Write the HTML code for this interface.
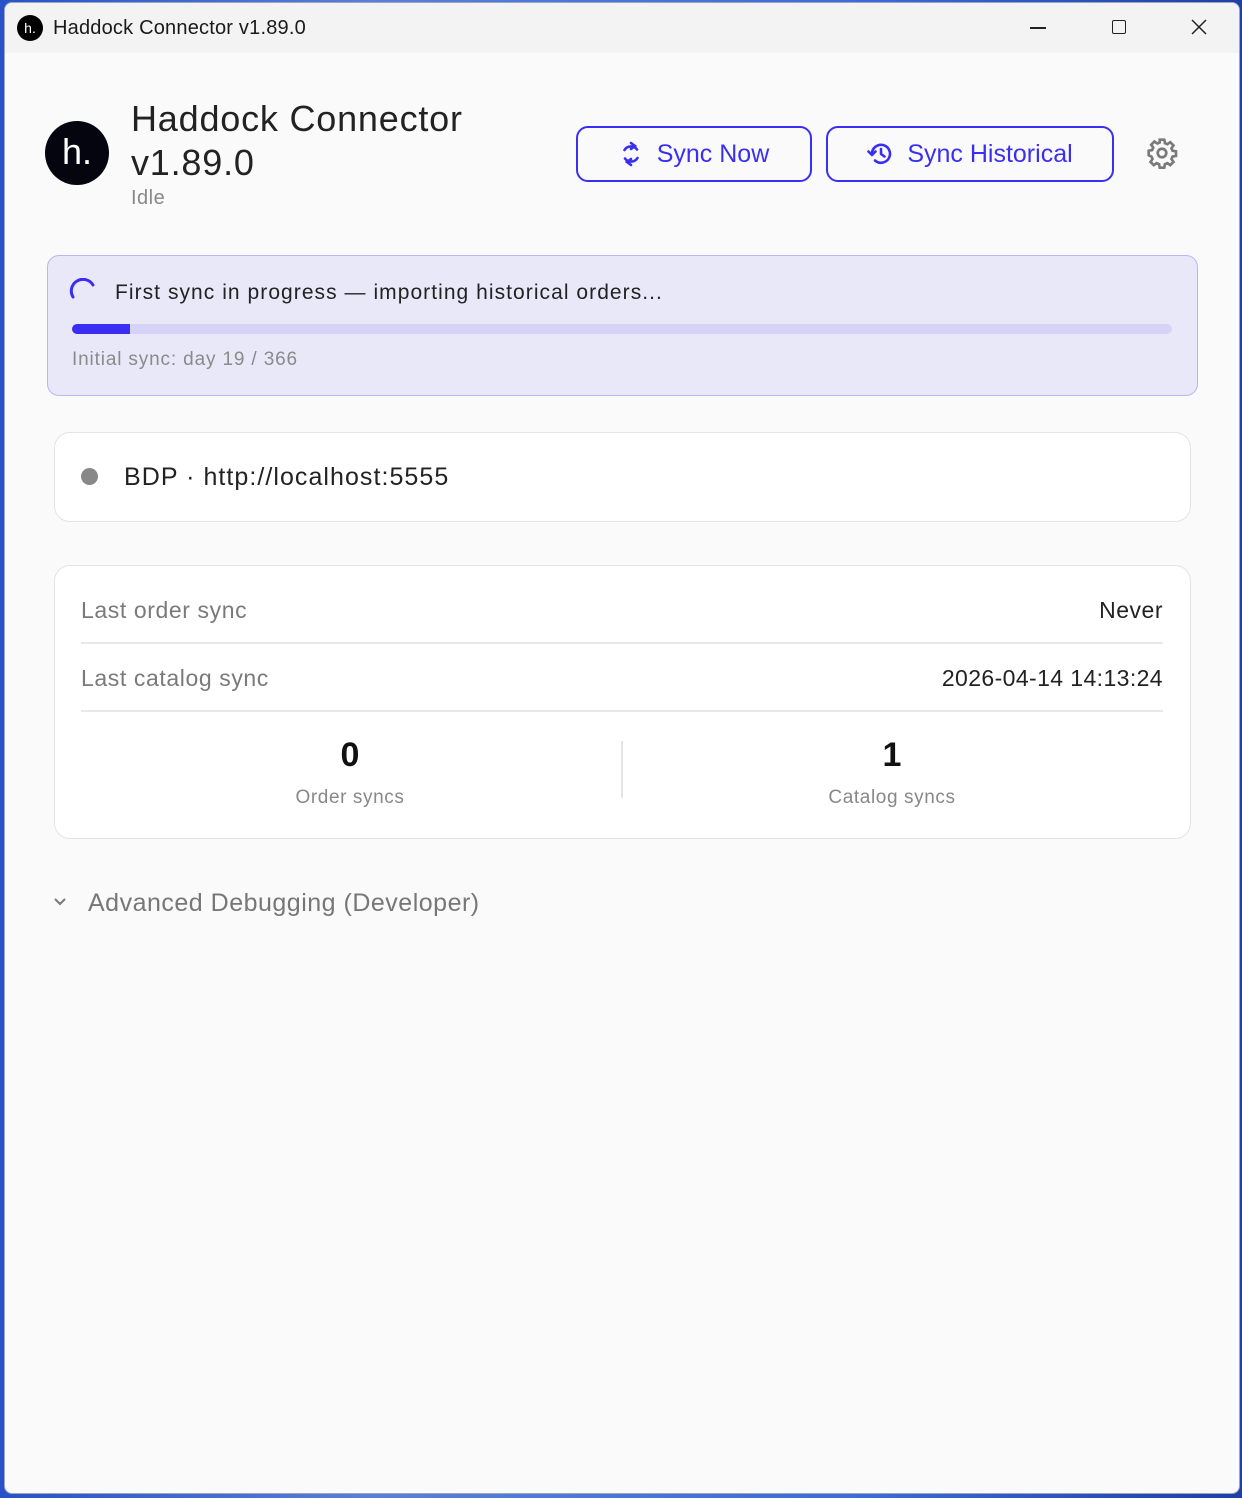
<!DOCTYPE html>
<html><head><meta charset="utf-8"><style>
*{margin:0;padding:0;box-sizing:border-box}
html,body{width:1242px;height:1498px;overflow:hidden}
body{background:linear-gradient(90deg,#2a52c8,#5a7fd8 30%,#3c6ad8 70%,#1f3fa8);font-family:"Liberation Sans","Noto Sans CJK JP",sans-serif;position:relative}
.win{position:absolute;left:4px;top:2px;width:1236px;height:1492px;background:#fafafa;border-radius:8px;overflow:hidden;border:1px solid #9aa6c0}
.tb{position:absolute;left:0;top:0;width:100%;height:50px;background:#f3f3f3}
.a{position:absolute;white-space:nowrap}
.btn{position:absolute;border:2px solid #3a2ff0;border-radius:12px;color:#3a2ff0;font-size:25px;display:flex;align-items:center;justify-content:center;gap:14px;background:#fafafa}
.card{position:absolute;background:#fff;border:1.5px solid #e4e4e4;border-radius:16px}
.lbl{font-size:23px;color:#7a7a7a;letter-spacing:0.6px}
.val{font-size:23px;color:#222}
.hr{position:absolute;left:81px;width:1082px;height:2px;background:#e8e8e8}
</style></head><body>
<div class="win">
 <div class="tb"></div>
</div>
<div class="a" style="left:17px;top:15px;width:26px;height:26px;border-radius:50%;background:#000;color:#fff;font-size:14px;line-height:26px;text-align:center">h.</div>
<div class="a" style="left:53px;top:17px;font-size:20px;color:#1a1a1a;letter-spacing:0.2px">Haddock Connector v1.89.0</div>
<div class="a" style="left:1030px;top:27px;width:16px;height:1.5px;background:#222"></div>
<div class="a" style="left:1112px;top:20px;width:14px;height:14px;border:1.5px solid #222;border-radius:2px"></div>
<svg class="a" style="left:1191px;top:19px" width="16" height="16"><path d="M1 1L15 15M15 1L1 15" stroke="#222" stroke-width="1.5"/></svg>
<div class="a" style="left:45px;top:121px;width:64px;height:64px;border-radius:50%;background:#050510;color:#fff;font-size:36px;line-height:62px;text-align:center">h.</div>
<div class="a" style="left:131px;top:97px;font-size:36px;line-height:44px;color:#222;letter-spacing:0.8px">Haddock Connector<br>v1.89.0</div>
<div class="a" style="left:131px;top:187px;font-size:20px;color:#888;letter-spacing:0.5px">Idle</div>
<div class="btn" style="left:576px;top:126px;width:236px;height:56px">
 <svg width="24" height="26" viewBox="0 0 24 26" fill="none" stroke="#3a2ff0" stroke-width="2.6" stroke-linecap="round"><path d="M18 8.5A7.5 7.5 0 0 0 5.5 9"/><path d="M6 17.5A7.5 7.5 0 0 0 18.5 17"/><path d="M12 2l4 3-4 3" /><path d="M12 24l-4-3 4-3"/></svg>
 <span>Sync Now</span></div>
<div class="btn" style="left:826px;top:126px;width:288px;height:56px">
 <svg width="26" height="24" viewBox="0 0 26 24" fill="none" stroke="#3a2ff0" stroke-width="2.6" stroke-linecap="round" stroke-linejoin="round"><path d="M5 12A9 9 0 1 1 8 18.5"/><path d="M1.5 9.5L5 13l3.5-3.5"/><path d="M14 7v5l3.5 2.5"/></svg>
 <span>Sync Historical</span></div>
<svg class="a" style="left:1146px;top:137px" width="32" height="32" viewBox="0 0 24 24" fill="none" stroke="#7a7a7a" stroke-width="2"><circle cx="12" cy="12" r="3.2"/><path d="M10.3 2h3.4l.5 2.6 1.8.8 2.2-1.5 2.4 2.4-1.5 2.2.8 1.8 2.6.5v3.4l-2.6.5-.8 1.8 1.5 2.2-2.4 2.4-2.2-1.5-1.8.8-.5 2.6h-3.4l-.5-2.6-1.8-.8-2.2 1.5-2.4-2.4 1.5-2.2-.8-1.8L2 13.7v-3.4l2.6-.5.8-1.8-1.5-2.2 2.4-2.4 2.2 1.5 1.8-.8z"/></svg>
<div class="a" style="left:47px;top:255px;width:1151px;height:141px;background:#e9e8f8;border:1.5px solid #b9b5f2;border-radius:12px"></div>
<svg class="a" style="left:69px;top:278px" width="28" height="28" viewBox="0 0 28 28" fill="none"><path d="M4 19A11 11 0 0 1 24 7" stroke="#3a2ff0" stroke-width="3" stroke-linecap="round"/></svg>
<div class="a" style="left:115px;top:281px;font-size:21px;color:#222;letter-spacing:1.05px">First sync in progress — importing historical orders...</div>
<div class="a" style="left:72px;top:324px;width:1100px;height:10px;border-radius:5px;background:#d5d3f7"></div>
<div class="a" style="left:72px;top:324px;width:58px;height:10px;border-radius:5px 0 0 5px;background:#3a2ff0"></div>
<div class="a" style="left:72px;top:349px;font-size:19px;color:#8a8a8a;letter-spacing:0.85px">Initial sync: day 19 / 366</div>
<div class="card" style="left:54px;top:432px;width:1137px;height:90px"></div>
<div class="a" style="left:81px;top:468px;width:17px;height:17px;border-radius:50%;background:#888"></div>
<div class="a" style="left:124px;top:463px;font-size:25px;color:#222;letter-spacing:1.05px">BDP · http://localhost:5555</div>
<div class="card" style="left:54px;top:565px;width:1137px;height:274px"></div>
<div class="a lbl" style="left:81px;top:597px">Last order sync</div>
<div class="a val" style="right:79px;top:597px;letter-spacing:0.5px">Never</div>
<div class="hr" style="top:642px"></div>
<div class="a lbl" style="left:81px;top:665px">Last catalog sync</div>
<div class="a val" style="right:79px;top:665px;letter-spacing:0.4px">2026-04-14 14:13:24</div>
<div class="hr" style="top:710px"></div>
<div class="a" style="left:250px;width:200px;text-align:center;top:736px;font-size:34px;font-weight:bold;color:#111">0</div>
<div class="a" style="left:250px;width:200px;text-align:center;top:787px;font-size:19px;color:#888;letter-spacing:0.6px">Order syncs</div>
<div class="a" style="left:621px;top:741px;width:2px;height:57px;background:#e4e4e4"></div>
<div class="a" style="left:792px;width:200px;text-align:center;top:736px;font-size:34px;font-weight:bold;color:#111">1</div>
<div class="a" style="left:792px;width:200px;text-align:center;top:787px;font-size:19px;color:#888;letter-spacing:0.6px">Catalog syncs</div>
<svg class="a" style="left:53px;top:897px" width="14" height="10" viewBox="0 0 14 10" fill="none"><path d="M2 2l5 5 5-5" stroke="#777" stroke-width="2"/></svg>
<div class="a" style="left:88px;top:889px;font-size:25px;color:#777;letter-spacing:0.5px">Advanced Debugging (Developer)</div>
</body></html>
